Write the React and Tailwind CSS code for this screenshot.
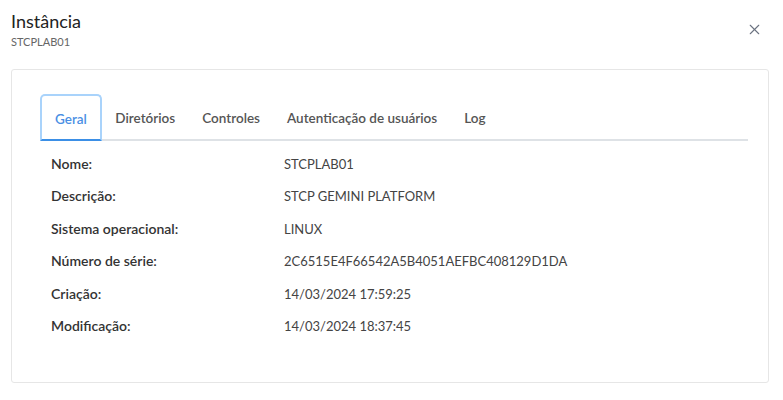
import { X } from 'lucide-react';

const tabs = ['Geral', 'Diretórios', 'Controles', 'Autenticação de usuários', 'Log'];

const rows = [
  ['Nome:', 'STCPLAB01'],
  ['Descrição:', 'STCP GEMINI PLATFORM'],
  ['Sistema operacional:', 'LINUX'],
  ['Número de série:', '2C6515E4F66542A5B4051AEFBC408129D1DA'],
  ['Criação:', '14/03/2024 17:59:25'],
  ['Modificação:', '14/03/2024 18:37:45'],
];

export default function App() {
  return (
    <div className="w-[783px] h-[400px] bg-white font-['Lato',sans-serif] text-[#444]">
      {/* Header */}
      <div className="flex items-start justify-between pl-[11px] pr-[20px] pt-[9px] h-[69px]">
        <div>
          <h1 className="text-[18px] leading-[24px] text-[#222]">Instância</h1>
          <p className="text-[11px] leading-[14px] text-[#666] mt-[2px]">STCPLAB01</p>
        </div>
        <button className="mt-[12px] text-[#6b7280]">
          <X size={17} strokeWidth={1.5} />
        </button>
      </div>

      {/* Card */}
      <div className="mx-[11px] w-[758px] h-[314px] border border-[#e6e6e6] rounded-[3px] pt-[24px] pl-[28px] pr-[20px]">
        {/* Tabs */}
        <div className="flex items-end border-b-2 border-[#dee2e6] w-[708px] h-[47px]">
          {tabs.map((t, i) =>
            i === 0 ? (
              <div
                key={t}
                className="h-[47px] -mb-[2px] px-[13px] pt-[3px] flex items-center border-2 border-[#a9d3fb] border-b-[#3b8fe6] rounded-t-[5px] text-[13.5px] font-semibold text-[#4a8fe4]"
              >
                {t}
              </div>
            ) : (
              <div key={t} className="h-[45px] px-[13.5px] pt-[3px] flex items-center text-[13.5px] font-semibold text-[#555]">
                {t}
              </div>
            )
          )}
        </div>

        {/* Details */}
        <div className="pl-[11px] pt-[6px]">
          {rows.map(([label, value]) => (
            <div key={label} className="flex items-baseline h-[32.4px] pt-[6px]">
              <span className="w-[233px] text-[14px] font-semibold text-[#333]">{label}</span>
              <span className="text-[13px] text-[#444]">{value}</span>
            </div>
          ))}
        </div>
      </div>
    </div>
  );
}
